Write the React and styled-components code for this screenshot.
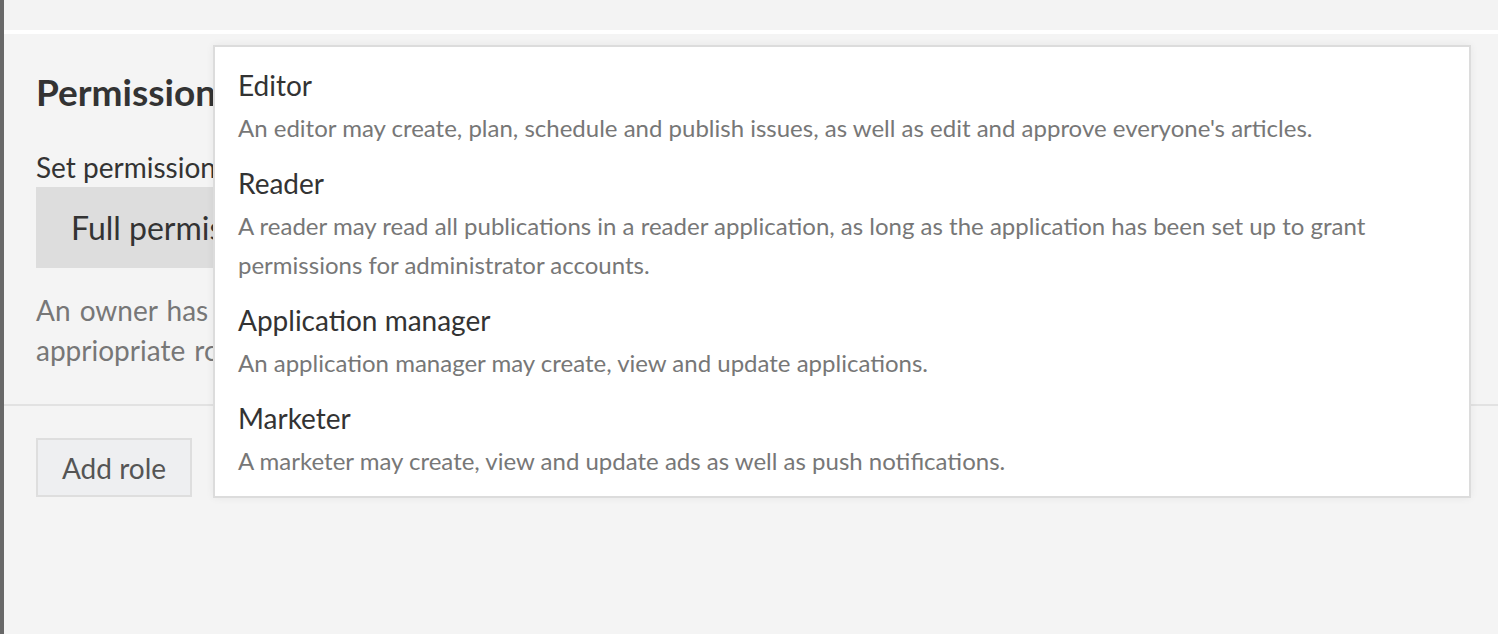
import React from "react";
import styled, { createGlobalStyle } from "styled-components";

const GlobalStyle = createGlobalStyle`
  html, body {
    margin: 0;
    padding: 0;
    background: #f4f4f4;
    font-family: Lato, "Noto Sans", sans-serif;
  }
  * {
    box-sizing: border-box;
  }
`;

const roles = [
  {
    name: "Editor",
    description:
      "An editor may create, plan, schedule and publish issues, as well as edit and approve everyone's articles.",
  },
  {
    name: "Reader",
    description:
      "A reader may read all publications in a reader application, as long as the application has been set up to grant permissions for administrator accounts.",
  },
  {
    name: "Application manager",
    description: "An application manager may create, view and update applications.",
  },
  {
    name: "Marketer",
    description: "A marketer may create, view and update ads as well as push notifications.",
  },
];

export default function App() {
  return (
    <>
      <GlobalStyle />
      <Page>
        <SideEdge />
        <Main>
          <TopStrip />
          <Content>
            <Section>
              <Heading>Permissions</Heading>
              <Label>Set permissions for this account</Label>
              <SelectBox>Full permissions</SelectBox>
              <HelpText>
                An owner has all permissions for publications and applications. Pick the
                appriopriate role for each user in the list below.
              </HelpText>
            </Section>
            <Divider />
            <Footer>
              <AddButton type="button">Add role</AddButton>
            </Footer>

            <RoleMenu>
              {roles.map((role) => (
                <RoleItem key={role.name}>
                  <RoleName>{role.name}</RoleName>
                  <RoleDescription>{role.description}</RoleDescription>
                </RoleItem>
              ))}
            </RoleMenu>
          </Content>
        </Main>
      </Page>
    </>
  );
}

const Page = styled.div`
  display: flex;
  width: 100%;
  height: 634px;
  overflow: hidden;
  background: #f4f4f4;
`;

const SideEdge = styled.div`
  flex: 0 0 4px;
  background: #686868;
`;

const Main = styled.div`
  flex: 1;
  display: flex;
  flex-direction: column;
`;

const TopStrip = styled.div`
  background: #f3f3f3;
  border-bottom: 4px solid #ffffff;
  flex: 0 0 34px;
`;

const Content = styled.div`
  position: relative;
  flex: 1;
`;

const Section = styled.div`
  padding: 36px 0 0 32px;
  height: 370px;
`;

const Heading = styled.h2`
  margin: 0;
  font-size: 37px;
  line-height: 44px;
  font-weight: 700;
  color: #333333;
`;

const Label = styled.div`
  margin-top: 37px;
  font-size: 28px;
  line-height: 32px;
  color: #333333;
`;

const SelectBox = styled.div`
  margin-top: 4px;
  width: 420px;
  height: 81px;
  padding: 0 35px;
  display: flex;
  align-items: center;
  background: #dddddd;
  font-size: 32px;
  color: #333333;
`;

const HelpText = styled.p`
  margin: 22px 0 0;
  width: 1000px;
  font-size: 28px;
  line-height: 40px;
  color: #777777;
  word-spacing: 2px;
`;

const Divider = styled.div`
  height: 2px;
  background: #e2e2e2;
`;

const Footer = styled.div`
  padding: 32px 0 0 32px;
`;

const AddButton = styled.button`
  width: 156px;
  height: 59px;
  border: 2px solid #dedede;
  background: #eeeff1;
  color: #555555;
  font-family: Lato, "Noto Sans", sans-serif;
  font-size: 28px;
  padding: 0;
`;

const RoleMenu = styled.div`
  position: absolute;
  top: 11px;
  left: 209px;
  width: 1258px;
  padding: 18px 23px 16px;
  background: #ffffff;
  border: 2px solid #dcdcdc;
  box-shadow: 0 0 8px rgba(0, 0, 0, 0.06);
`;

const RoleItem = styled.div`
  margin-bottom: 16px;

  &:last-child {
    margin-bottom: 0;
  }
`;

const RoleName = styled.div`
  font-size: 28px;
  line-height: 40px;
  color: #333333;
`;

const RoleDescription = styled.div`
  margin-top: 3px;
  font-size: 24px;
  line-height: 39px;
  color: #777777;
`;
